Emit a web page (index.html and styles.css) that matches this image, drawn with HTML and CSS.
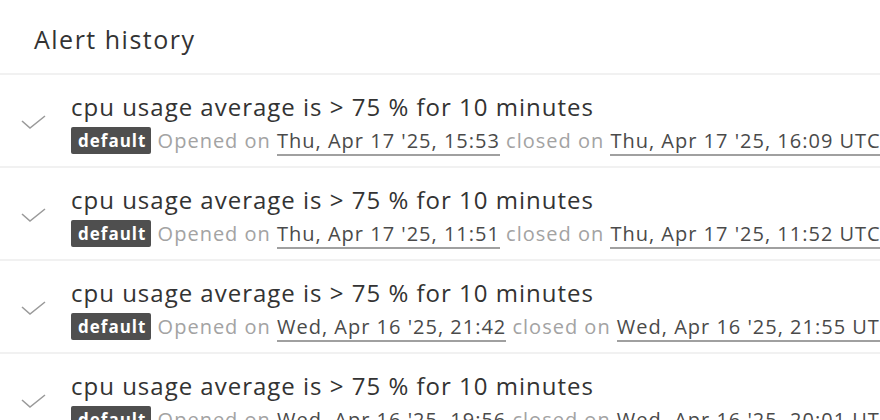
FILE: index.html
```html
<!DOCTYPE html>
<html>
<head>
<meta charset="UTF-8">
<title>Alert history</title>
<link rel="stylesheet" href="styles.css">
</head>
<body>
<div class="panel">
  <div class="panel-head">Alert history</div>
  <ul class="alerts">
    <li class="alert">
      <svg class="check" width="71" height="20" viewBox="0 0 71 20"><polyline points="22,7 30,14 45,2" /></svg>
      <div class="alert-body">
        <div class="alert-title">cpu usage average is &gt; 75 % for 10 minutes</div>
        <div class="alert-meta"><span class="badge">default</span> Opened on <span class="date">Thu, Apr 17 '25, 15:53</span> closed on <span class="date">Thu, Apr 17 '25, 16:09 UTC</span></div>
      </div>
    </li>
    <li class="alert">
      <svg class="check" width="71" height="20" viewBox="0 0 71 20"><polyline points="22,7 30,14 45,2" /></svg>
      <div class="alert-body">
        <div class="alert-title">cpu usage average is &gt; 75 % for 10 minutes</div>
        <div class="alert-meta"><span class="badge">default</span> Opened on <span class="date">Thu, Apr 17 '25, 11:51</span> closed on <span class="date">Thu, Apr 17 '25, 11:52 UTC</span></div>
      </div>
    </li>
    <li class="alert">
      <svg class="check" width="71" height="20" viewBox="0 0 71 20"><polyline points="22,7 30,14 45,2" /></svg>
      <div class="alert-body">
        <div class="alert-title">cpu usage average is &gt; 75 % for 10 minutes</div>
        <div class="alert-meta"><span class="badge">default</span> Opened on <span class="date">Wed, Apr 16 '25, 21:42</span> closed on <span class="date">Wed, Apr 16 '25, 21:55 UTC</span></div>
      </div>
    </li>
    <li class="alert">
      <svg class="check" width="71" height="20" viewBox="0 0 71 20"><polyline points="22,7 30,14 45,2" /></svg>
      <div class="alert-body">
        <div class="alert-title">cpu usage average is &gt; 75 % for 10 minutes</div>
        <div class="alert-meta"><span class="badge">default</span> Opened on <span class="date">Wed, Apr 16 '25, 19:56</span> closed on <span class="date">Wed, Apr 16 '25, 20:01 UTC</span></div>
      </div>
    </li>
  </ul>
</div>
</body>
</html>
```
FILE: styles.css
```css
:root {
  --text: #333;
  --muted: #a3a3a3;
  --date: #4a4a4a;
  --line: #f1f1f1;
  --badge-bg: #4f4f4f;
}

html, body {
  margin: 0;
  padding: 0;
  background: #fff;
  overflow: hidden;
}

.panel {
  font-family: "Open Sans", "Liberation Sans", sans-serif;
  color: var(--text);
  white-space: nowrap;
  letter-spacing: 1px;
}

.panel-head {
  height: 75px;
  padding-left: 34px;
  font-size: 25px;
  letter-spacing: 1.5px;
  line-height: 78px;
  font-weight: 500;
  box-sizing: border-box;
  border-bottom: 2px solid var(--line);
}

.alerts {
  list-style: none;
  margin: 0;
  padding: 0;
}

.alert {
  display: flex;
  align-items: center;
  height: 93px;
  box-sizing: border-box;
  border-bottom: 2px solid var(--line);
  padding-top: 9px;
}

.check {
  flex: none;
  margin-top: -2px;
}
.check polyline {
  fill: none;
  stroke: #9a9a9a;
  stroke-width: 1.6;
}

.alert-title {
  font-size: 24px;
  line-height: 32px;
  font-weight: 500;
}

.alert-meta {
  font-size: 20px;
  line-height: 36px;
  color: var(--muted);
}

.badge {
  display: inline-block;
  background: var(--badge-bg);
  color: #fff;
  font-weight: 700;
  font-size: 17px;
  line-height: 27px;
  padding: 0 5px 0 7px;
  border-radius: 2px;
  vertical-align: 1px;
}

.date {
  color: var(--date);
  border-bottom: 2px solid #a0a0a0;
}
```
